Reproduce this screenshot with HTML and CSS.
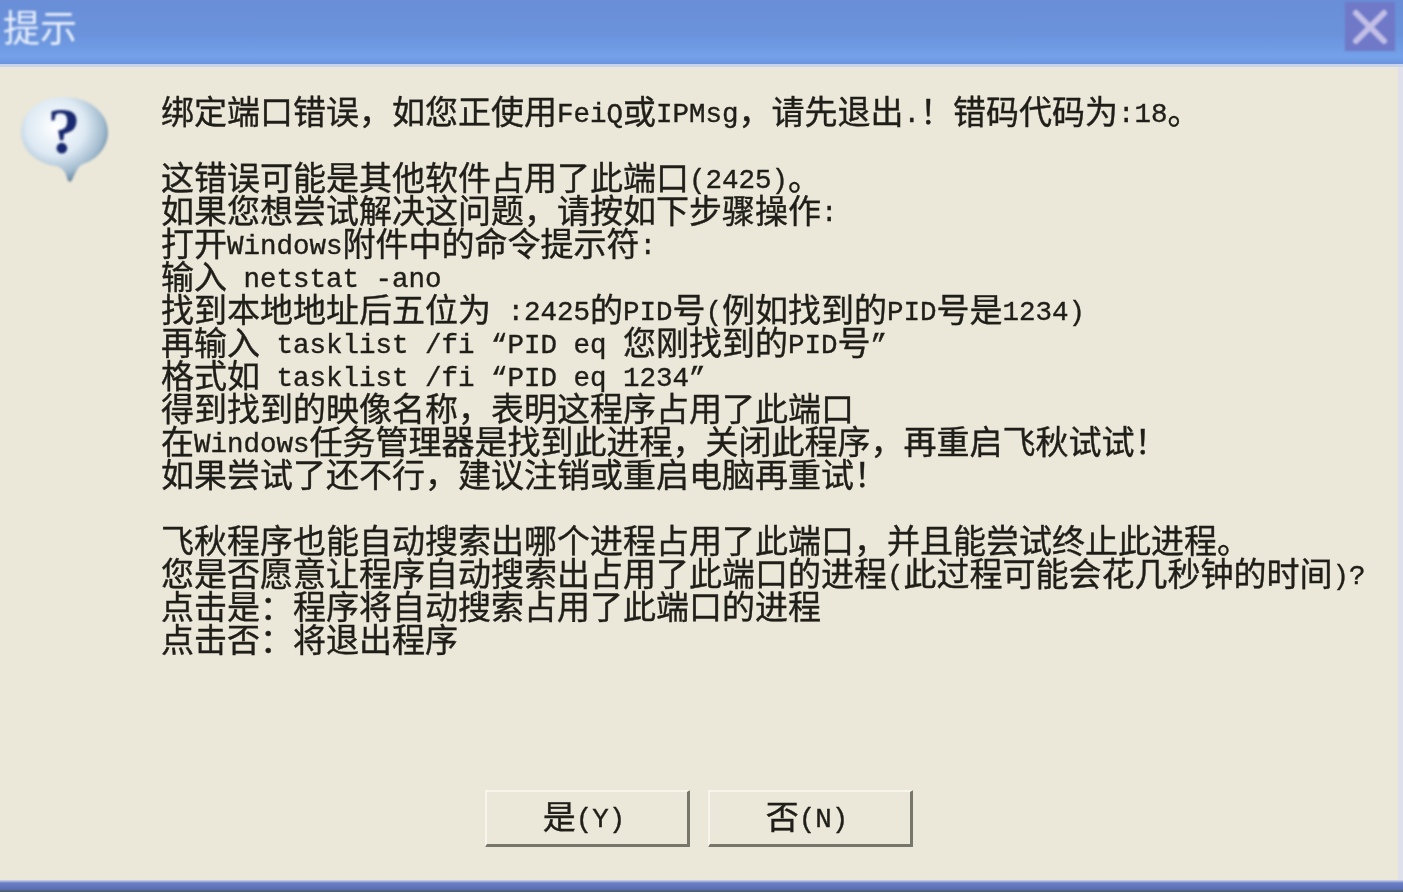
FILE: index.html
```html
<!DOCTYPE html>
<html lang="zh-CN">
<head>
    <meta charset="UTF-8">
    <title>提示</title>
    <link rel="stylesheet" href="styles.css">
</head>
<body>
    <div class="dialog">
        <div class="titlebar">
            <span class="title">提示</span>
            <div class="close-btn">
                <svg class="close-x" viewBox="0 0 50 50" width="50" height="50">
                    <path d="M11 11 L39 39 M39 11 L11 39" fill="none" stroke="#c3bfe6" stroke-width="6" stroke-linecap="round"/>
                </svg>
            </div>
        </div>

        <div class="content">
            <svg class="question-icon" viewBox="0 -8 90 98" width="90" height="98">
                <defs>
                    <radialGradient id="bubble" cx="40%" cy="35%" r="68%">
                        <stop offset="0%" stop-color="#ffffff"/>
                        <stop offset="50%" stop-color="#dde9f3"/>
                        <stop offset="80%" stop-color="#a3bccf"/>
                        <stop offset="100%" stop-color="#5f7d97"/>
                    </radialGradient>
                </defs>
                <path d="M44 0 C68 0 88 15 88 35 C88 51 76 63 63 67 C58 69 56 75 52 83 C50 86 48 85 47 81 C46 76 43 71 36 69 C17 67 1 53 1 35 C1 15 20 0 44 0 Z" fill="url(#bubble)"/>
                <text class="question-mark" x="44" y="56" text-anchor="middle">?</text>
            </svg>

            <div class="message">
                <p>绑定端口错误，如您正使用<span class="lat">FeiQ</span>或<span class="lat">IPMsg</span>，请先退出<span class="lat">.</span>！错码代码为<span class="lat">:18</span>。</p>
                <p>这错误可能是其他软件占用了此端口<span class="lat">(2425)</span>。<br>
                如果您想尝试解决这问题，请按如下步骤操作<span class="lat">:</span><br>
                打开<span class="lat">Windows</span>附件中的命令提示符<span class="lat">:</span><br>
                输入<span class="lat"> netstat -ano</span><br>
                找到本地地址后五位为<span class="lat"> :2425</span>的<span class="lat">PID</span>号<span class="lat">(</span>例如找到的<span class="lat">PID</span>号是<span class="lat">1234)</span><br>
                再输入<span class="lat"> tasklist /fi “PID eq </span>您刚找到的<span class="lat">PID</span>号<span class="lat">”</span><br>
                格式如<span class="lat"> tasklist /fi “PID eq 1234”</span><br>
                得到找到的映像名称，表明这程序占用了此端口<br>
                在<span class="lat">Windows</span>任务管理器是找到此进程，关闭此程序，再重启飞秋试试！<br>
                如果尝试了还不行，建议注销或重启电脑再重试！</p>
                <p>飞秋程序也能自动搜索出哪个进程占用了此端口，并且能尝试终止此进程。<br>
                您是否愿意让程序自动搜索出占用了此端口的进程<span class="lat">(</span>此过程可能会花几秒钟的时间<span class="lat">)?</span><br>
                点击是<span class="centered">：</span>程序将自动搜索占用了此端口的进程<br>
                点击否<span class="centered">：</span>将退出程序</p>
            </div>
        </div>

        <div class="buttons">
            <button class="btn" type="button">是<span class="lat">(Y)</span></button>
            <button class="btn" type="button">否<span class="lat">(N)</span></button>
        </div>
    </div>
    <div class="taskbar"></div>
</body>
</html>
```

FILE: styles.css
```css
html, body {
    height: 100%;
}

body {
    margin: 0;
    display: flex;
    flex-direction: column;
    overflow: hidden;
    background-color: #ebe8d9;
    font-family: "Noto Sans CJK SC", sans-serif;
    color: #1f1e19;
}

.dialog {
    flex: 1;
    display: flex;
    flex-direction: column;
    min-height: 0;
    border-right: 5px solid #dfe0ec;
}

.titlebar {
    height: 64px;
    flex: none;
    display: flex;
    align-items: center;
    justify-content: space-between;
    padding: 0 3px;
    background: linear-gradient(to bottom, #6a8ed8 0%, #6a93dc 55%, #73a1e9 88%, #6c94e0 100%);
    border-bottom: 3px solid #c9d3ea;
    margin-right: -5px;
}

.title {
    font-size: 37px;
    color: #e9f0fa;
    line-height: 37px;
    margin-top: -12px;
    filter: blur(1px);
}

.close-btn {
    width: 50px;
    height: 49px;
    margin: -11px 5px 0 0;
    display: flex;
    align-items: center;
    justify-content: center;
    background-color: #6f79c8;
    filter: blur(1.2px);
}

.content {
    flex: 1;
    display: flex;
    align-items: flex-start;
    padding-top: 27px;
    padding-left: 20px;
}

.question-icon {
    flex: none;
    margin-top: -5px;
    filter: blur(0.8px);
}

.question-mark {
    font-family: "Liberation Serif", serif;
    font-weight: bold;
    font-size: 66px;
    fill: #18296f;
}

.message {
    margin-left: 51px;
    font-size: 33px;
    line-height: 33px;
    white-space: nowrap;
    -webkit-text-stroke: 0.4px #1f1e19;
    filter: blur(0.7px);
}

.message p {
    margin: 0 0 33px;
}

/* line-height 0 so the smaller font does not push the 33px lines apart */
.lat {
    font-family: "Liberation Mono", monospace;
    font-size: 27.5px;
    line-height: 0;
    white-space: pre;
    vertical-align: 2px;
}

.centered {
    font-family: "Noto Sans CJK TC", sans-serif;
}

.buttons {
    flex: none;
    display: flex;
    justify-content: flex-start;
    gap: 18px;
    padding-left: 485px;
    padding-bottom: 33px;
}

.btn {
    width: 205px;
    height: 57px;
    padding: 0 6px 6px 0;
    background-color: #ebe8d9;
    border-style: solid;
    border-width: 2px 3px 3px 2px;
    border-color: #f8f6ec #77766a #77766a #f8f6ec;
    border-radius: 1px;
    font-family: "Noto Sans CJK SC", sans-serif;
    font-size: 33px;
    line-height: 1;
    color: #1f1e19;
    -webkit-text-stroke: 0.4px #1f1e19;
    filter: blur(0.7px);
}

.taskbar {
    height: 12px;
    flex: none;
    background: linear-gradient(to bottom, #d5d9ee 0%, #6d80c6 25%, #5a6fb8 75%, #4c5c58 100%);
}
```
